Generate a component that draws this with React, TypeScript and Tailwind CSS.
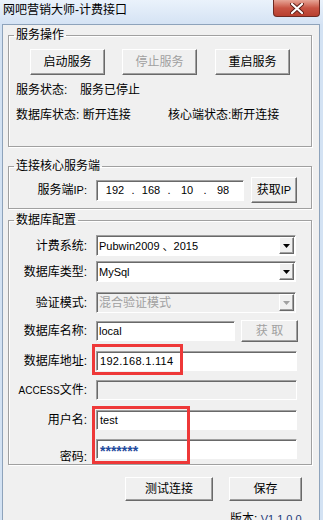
import React from "react";

const raised =
  "border border-t-white border-l-white border-r-[#696969] border-b-[#696969] shadow-[inset_-1px_-1px_0_#a0a0a0] bg-[#f0f0f0]";
const sunken =
  "border border-t-[#a0a0a0] border-l-[#a0a0a0] border-r-white border-b-white shadow-[inset_1px_1px_0_#696969]";

function Btn({ children, disabled, className }: { children: React.ReactNode; disabled?: boolean; className: string }) {
  return (
    <div className={`${raised} ${className} flex items-center justify-center ${disabled ? "text-[#a0a0a0]" : "text-black"}`}>
      {children}
    </div>
  );
}

function Arrow({ disabled }: { disabled?: boolean }) {
  return (
    <div className={`${raised} w-[15px] h-[17px] mr-[1px] flex items-center justify-center`}>
      <svg width="7" height="4" viewBox="0 0 7 4">
        <path d="M0 0h7L3.5 4z" fill={disabled ? "#a0a0a0" : "#000"} />
      </svg>
    </div>
  );
}

function Label({ children, className = "" }: { children: React.ReactNode; className?: string }) {
  return <span className={`w-[78px] shrink-0 text-right ${className}`}>{children}</span>;
}

export default function App() {
  return (
    <div className="relative w-[323px] h-[520px] overflow-hidden bg-[#d3e2f3] text-[12px] leading-[14px] text-black font-['Liberation_Sans','Noto_Sans_CJK_SC',sans-serif]">
      {/* title bar */}
      <div className="flex h-[24px] items-start justify-between bg-linear-to-b from-[#eaf2fb] to-[#d5e3f4]">
        <span className="pl-[3px] pt-[3px]">网吧营销大师-计费接口</span>
        <div className="mr-[3px] w-[47px] h-[17px] rounded-b-[4px] border border-t-0 border-[#6e2a22] bg-linear-to-b from-[#e6a597] via-[#c85444] to-[#b8402f] flex items-center justify-center">
          <svg width="14" height="11" viewBox="0 0 14 11">
            <path d="M2 1l10 9M12 1L2 10" stroke="#5a1d16" strokeWidth="4" strokeLinecap="round" />
            <path d="M2 1l10 9M12 1L2 10" stroke="#fff" strokeWidth="2.2" strokeLinecap="round" />
          </svg>
        </div>
      </div>

      {/* client area */}
      <div className="ml-[2px] w-[318px] h-[496px] border-l border-t border-r border-[#8ea3bb] bg-[#f0f0f0]">
        <fieldset className="mx-[5px] mt-[3px] w-[304px] border border-[#a0a0a0] shadow-[1px_1px_0_#fff,inset_1px_1px_0_#fff] pb-[24px]">
          <legend className="ml-[5px] px-[2px] leading-[14px]">服务操作</legend>
          <div className="mt-[7px] ml-[21px] flex gap-[17px]">
            <Btn className="w-[75px] h-[26px]">启动服务</Btn>
            <Btn className="w-[75px] h-[26px]" disabled>
              停止服务
            </Btn>
            <Btn className="w-[75px] h-[26px] ml-[1px]">重启服务</Btn>
          </div>
          <div className="mt-[8px] ml-[7px] flex">
            <span className="w-[64px]">服务状态:</span>
            <span>服务已停止</span>
          </div>
          <div className="mt-[11px] ml-[7px] flex">
            <span className="w-[152px]">数据库状态: 断开连接</span>
            <span>核心端状态:断开连接</span>
          </div>
        </fieldset>

        <fieldset className="mx-[5px] mt-[12px] w-[304px] border border-[#a0a0a0] shadow-[1px_1px_0_#fff,inset_1px_1px_0_#fff] pb-[5px]">
          <legend className="ml-[5px] px-[2px] leading-[14px]">连接核心服务端</legend>
          <div className="mt-[4px] h-[26px] flex items-center">
            <Label>
              服务端<span className="text-[11px]">IP:</span>
            </Label>
            <div className={`${sunken} ml-[9px] w-[148px] h-[21px] bg-white flex items-center pl-[3px] text-[11px]`}>
              <span className="w-[30px] text-center">192</span>
              <span className="w-[6px] text-center">.</span>
              <span className="w-[30px] text-center">168</span>
              <span className="w-[6px] text-center">.</span>
              <span className="w-[30px] text-center">10</span>
              <span className="w-[6px] text-center">.</span>
              <span className="w-[30px] text-center">98</span>
            </div>
            <Btn className="ml-[7px] w-[46px] h-[26px]">
              获取<span className="text-[11px]">IP</span>
            </Btn>
          </div>
        </fieldset>

        <fieldset className="mx-[5px] mt-[4px] w-[304px] border border-[#a0a0a0] shadow-[1px_1px_0_#fff,inset_1px_1px_0_#fff]">
          <legend className="ml-[5px] px-[2px] leading-[14px]">数据库配置</legend>

          <div className="mt-[8px] h-[21px] flex items-center">
            <Label>计费系统:</Label>
            <div className={`${sunken} ml-[9px] w-[200px] h-[21px] bg-white flex items-center`}>
              <span className="flex-1 pl-[2px] text-[11px]">Pubwin2009 、2015</span>
              <Arrow />
            </div>
          </div>

          <div className="mt-[5px] h-[21px] flex items-center">
            <Label>数据库类型:</Label>
            <div className={`${sunken} ml-[9px] w-[200px] h-[21px] bg-white flex items-center`}>
              <span className="flex-1 pl-[2px] text-[11px]">MySql</span>
              <Arrow />
            </div>
          </div>

          <div className="mt-[10px] h-[21px] flex items-center">
            <Label>验证模式:</Label>
            <div className={`${sunken} ml-[9px] w-[200px] h-[21px] bg-[#f0f0f0] flex items-center`}>
              <span className="flex-1 pl-[2px] text-[#a0a0a0]">混合验证模式</span>
              <Arrow disabled />
            </div>
          </div>

          <div className="mt-[7px] h-[22px] flex items-center">
            <Label>数据库名称:</Label>
            <div className={`${sunken} ml-[9px] w-[139px] h-[20px] bg-white flex items-center pl-[2px] text-[11px]`}>local</div>
            <Btn className="ml-[6px] w-[57px] h-[22px]" disabled>
              获 取
            </Btn>
          </div>

          <div className="mt-[9px] h-[20px] flex items-center">
            <Label>数据库地址:</Label>
            <div className={`${sunken} ml-[9px] w-[201px] h-[20px] bg-white flex items-center pl-[3px] text-[11px] tracking-[0.3px]`}>
              192.168.1.114
            </div>
          </div>

          <div className="mt-[9px] h-[20px] flex items-center">
            <Label>
              <span className="text-[10px]">ACCESS</span>文件:
            </Label>
            <div className={`${sunken} ml-[9px] w-[201px] h-[20px] bg-[#f0f0f0]`} />
          </div>

          <div className="mt-[10px] h-[20px] flex items-center">
            <Label>用户名:</Label>
            <div className={`${sunken} ml-[9px] w-[201px] h-[20px] bg-white flex items-center pl-[3px] text-[11px]`}>test</div>
          </div>

          <div className="mt-[9px] flex items-start">
            <Label className="mt-[11px]">密码:</Label>
            <div className={`${sunken} ml-[9px] w-[201px] h-[20px] bg-white flex items-center pl-[3px] pt-[3px] text-[14px] font-bold text-[#1f4a9c]`}>
              *******
            </div>
          </div>
        </fieldset>

        <div className="mt-[12px] ml-[122px] flex">
          <Btn className="w-[88px] h-[24px]">测试连接</Btn>
          <Btn className="ml-[16px] w-[73px] h-[24px]">保存</Btn>
        </div>
        <div className="mt-[11px] ml-[227px]">
          版本: <span className="text-[11px] text-[#1e3a7a]">V1.1.0.0</span>
        </div>
      </div>

      {/* annotation boxes */}
      <div className="absolute left-[92px] top-[344px] w-[91px] h-[31px] border-[3px] border-[#ee3838]" />
      <div className="absolute left-[92px] top-[406px] w-[98px] h-[58px] border-[3px] border-[#ee3838]" />
    </div>
  );
}
